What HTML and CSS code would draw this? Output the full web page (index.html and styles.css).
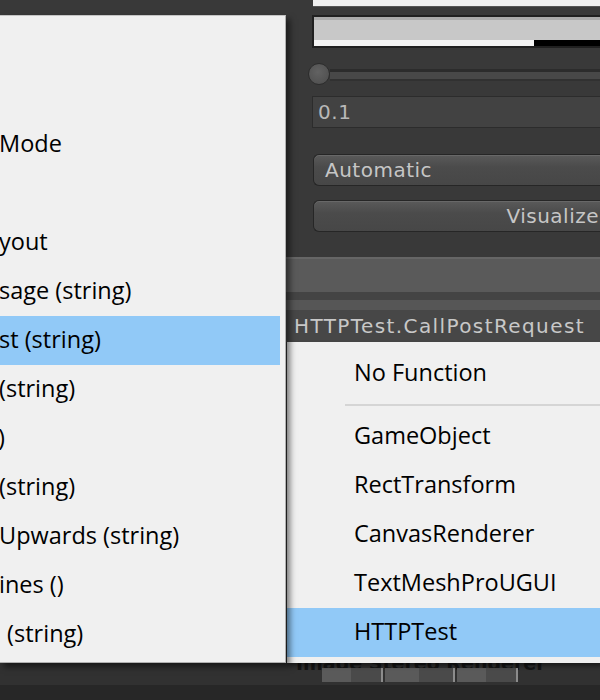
FILE: index.html
```html
<!DOCTYPE html>
<html>
<head>
<meta charset="utf-8">
<title>Unity event function menu</title>
<link rel="stylesheet" href="styles.css">
</head>
<body>
<div class="inspector">
  <div class="topbar"></div>
  <div class="colorfield">
    <div class="swatch"></div>
    <div class="alpha"><div class="alpha-fill"></div></div>
  </div>
  <div class="slider"><div class="knob"></div><div class="track"></div></div>
  <div class="field">0.1</div>
  <div class="dropdown">Automatic</div>
  <div class="button">Visualize</div>
  <div class="event-header"></div>
  <div class="event-sep"></div>
  <div class="event-field">HTTPTest.CallPostRequest</div>
  <div class="spacer"></div>
  <div class="below">
    <div class="ghost">Image Stereo Renderer</div>
    <div class="chips">
      <div class="chip"></div>
      <div class="chip wide"></div>
      <div class="chip"></div>
    </div>
  </div>
  <div class="footer"></div>
</div>

<div class="menu menu-left">
  <div class="item"></div>
  <div class="item"></div>
  <div class="item">Mode</div>
  <div class="item"></div>
  <div class="item">yout</div>
  <div class="item">sage (string)</div>
  <div class="item active">st (string)</div>
  <div class="item">(string)</div>
  <div class="item"><span class="clip">()</span></div>
  <div class="item">(string)</div>
  <div class="item">Upwards (string)</div>
  <div class="item">ines ()</div>
  <div class="item ind"> (string)</div>
</div>

<div class="menu menu-right">
  <div class="item">No Function</div>
  <div class="sep"></div>
  <div class="item">GameObject</div>
  <div class="item">RectTransform</div>
  <div class="item">CanvasRenderer</div>
  <div class="item">TextMeshProUGUI</div>
  <div class="item active">HTTPTest</div>
</div>
</body>
</html>
```

FILE: styles.css
```css
* { box-sizing: border-box; }
html, body { margin: 0; padding: 0; }
body {
  width: 600px;
  height: 700px;
  overflow: hidden;
  background: #393939;
  font-family: "DejaVu Sans", sans-serif;
  position: relative;
}

.inspector {
  display: flex;
  flex-direction: column;
  height: 700px;
}

.topbar {
  margin-left: 313px;
  height: 7px;
  background: #efefef;
  border-bottom: 1px solid #555;
}

.colorfield {
  margin: 8px 0 0 312px;
  height: 33px;
  border: 2px solid #202020;
  border-right: none;
  display: flex;
  flex-direction: column;
  background: #202020;
}
.swatch {
  flex: 1;
  background: linear-gradient(#ababab 0, #ababab 3px, #c8c8c8 3px);
}
.alpha {
  height: 6px;
  display: flex;
  background: #000;
}
.alpha-fill {
  width: 220px;
  background: #f4f4f4;
}

.slider {
  margin: 14px 0 0 308px;
  height: 23px;
  display: flex;
  align-items: center;
}
.knob {
  flex: none;
  width: 22px;
  height: 22px;
  border-radius: 50%;
  background: radial-gradient(circle at 45% 40%, #626262, #4c4c4c);
  border: 1px solid #2c2c2c;
}
.track {
  flex: 1;
  height: 12px;
  margin-top: 3px;
  background: #484848;
  border-top: 3px solid #2c2c2c;
  border-bottom: 2px solid #313131;
}

.field {
  margin: 11px 0 0 312px;
  height: 32px;
  border: 1px solid #2c2c2c;
  border-right: none;
  background: #424242;
  color: #b8b8b8;
  font-size: 20px;
  letter-spacing: 0.6px;
  padding-left: 5px;
  display: flex;
  align-items: center;
}

.dropdown, .button {
  height: 32px;
  margin-left: 313px;
  border: 1px solid #262626;
  border-right: none;
  border-radius: 6px 0 0 6px;
  background: linear-gradient(#5a5a5a, #4b4b4b 40%, #474747);
  box-shadow: inset 0 1px 0 #686868;
  color: #c6c6c6;
  font-size: 20px;
  letter-spacing: 0.5px;
  display: flex;
  align-items: center;
}
.dropdown {
  margin-top: 26px;
  padding-left: 11px;
}
.button {
  margin-top: 14px;
  justify-content: flex-end;
  padding-right: 1px;
}

.event-header {
  margin-top: 25px;
  height: 35px;
  background: #5a5a5a;
  border-top: 2px solid #666;
}
.event-sep {
  height: 18px;
  background: #444;
  border-bottom: 10px solid #565656;
}
.event-field {
  height: 32px;
  background: #474747;
  color: #c8c8c8;
  font-size: 20px;
  letter-spacing: 1.4px;
  padding-left: 294px;
  display: flex;
  align-items: center;
}

.spacer { flex: 1; }

.below {
  height: 40px;
  background: #313131;
  display: flex;
  flex-direction: column;
}
.ghost {
  height: 23px;
  padding-left: 296px;
  font-size: 19px;
  font-weight: bold;
  line-height: 36px;
  color: #141414;
  white-space: nowrap;
}
.chips {
  display: flex;
  margin-left: 322px;
  height: 14px;
  gap: 2px;
}
.chip {
  width: 61px;
  background: linear-gradient(90deg, #5a5a5a 50%, #4a4a4a 50%);
  border-right: 2px solid #8c8c8c;
}
.chip.wide { width: 70px; }

.footer {
  height: 15px;
  background: #272727;
}

/* Windows popup menus */
.menu {
  position: absolute;
  background: #f0f0f0;
  font-family: "Open Sans", "Noto Sans", sans-serif;
  font-size: 23.5px;
  color: #000;
  display: flex;
  flex-direction: column;
}
.menu .item {
  height: 49px;
  flex: none;
  display: flex;
  align-items: center;
  padding-bottom: 3px;
  white-space: pre;
  overflow: hidden;
}
.menu .item.active { background: #91c9f7; }

.menu-left {
  left: 0;
  top: 15px;
  width: 286px;
  height: 648px;
  padding-top: 6px;
  border-top: 1px solid #c4c4c4;
  border-right: 1px solid #b0b0b0;
  border-bottom: 1px solid #b0b0b0;
  box-shadow: 4px 4px 6px rgba(0, 0, 0, 0.5);
  z-index: 2;
}
.menu-left .item {
  margin-right: 5px;
  text-indent: -1px;
}
.menu-left .clip { margin-left: -8px; }
.menu-left .ind { padding-left: 2px; }

.menu-right {
  left: 287px;
  top: 342px;
  right: 0;
  height: 321px;
  padding-top: 7px;
  box-shadow: 2px 3px 4px rgba(0, 0, 0, 0.45);
  z-index: 1;
}
.menu-right .item { padding-left: 67px; }
.menu-right .sep {
  height: 14px;
  flex: none;
  margin-left: 58px;
  display: flex;
  align-items: center;
}
.menu-right .sep::after {
  content: "";
  flex: 1;
  height: 2px;
  background: #d5d5d5;
}
```
